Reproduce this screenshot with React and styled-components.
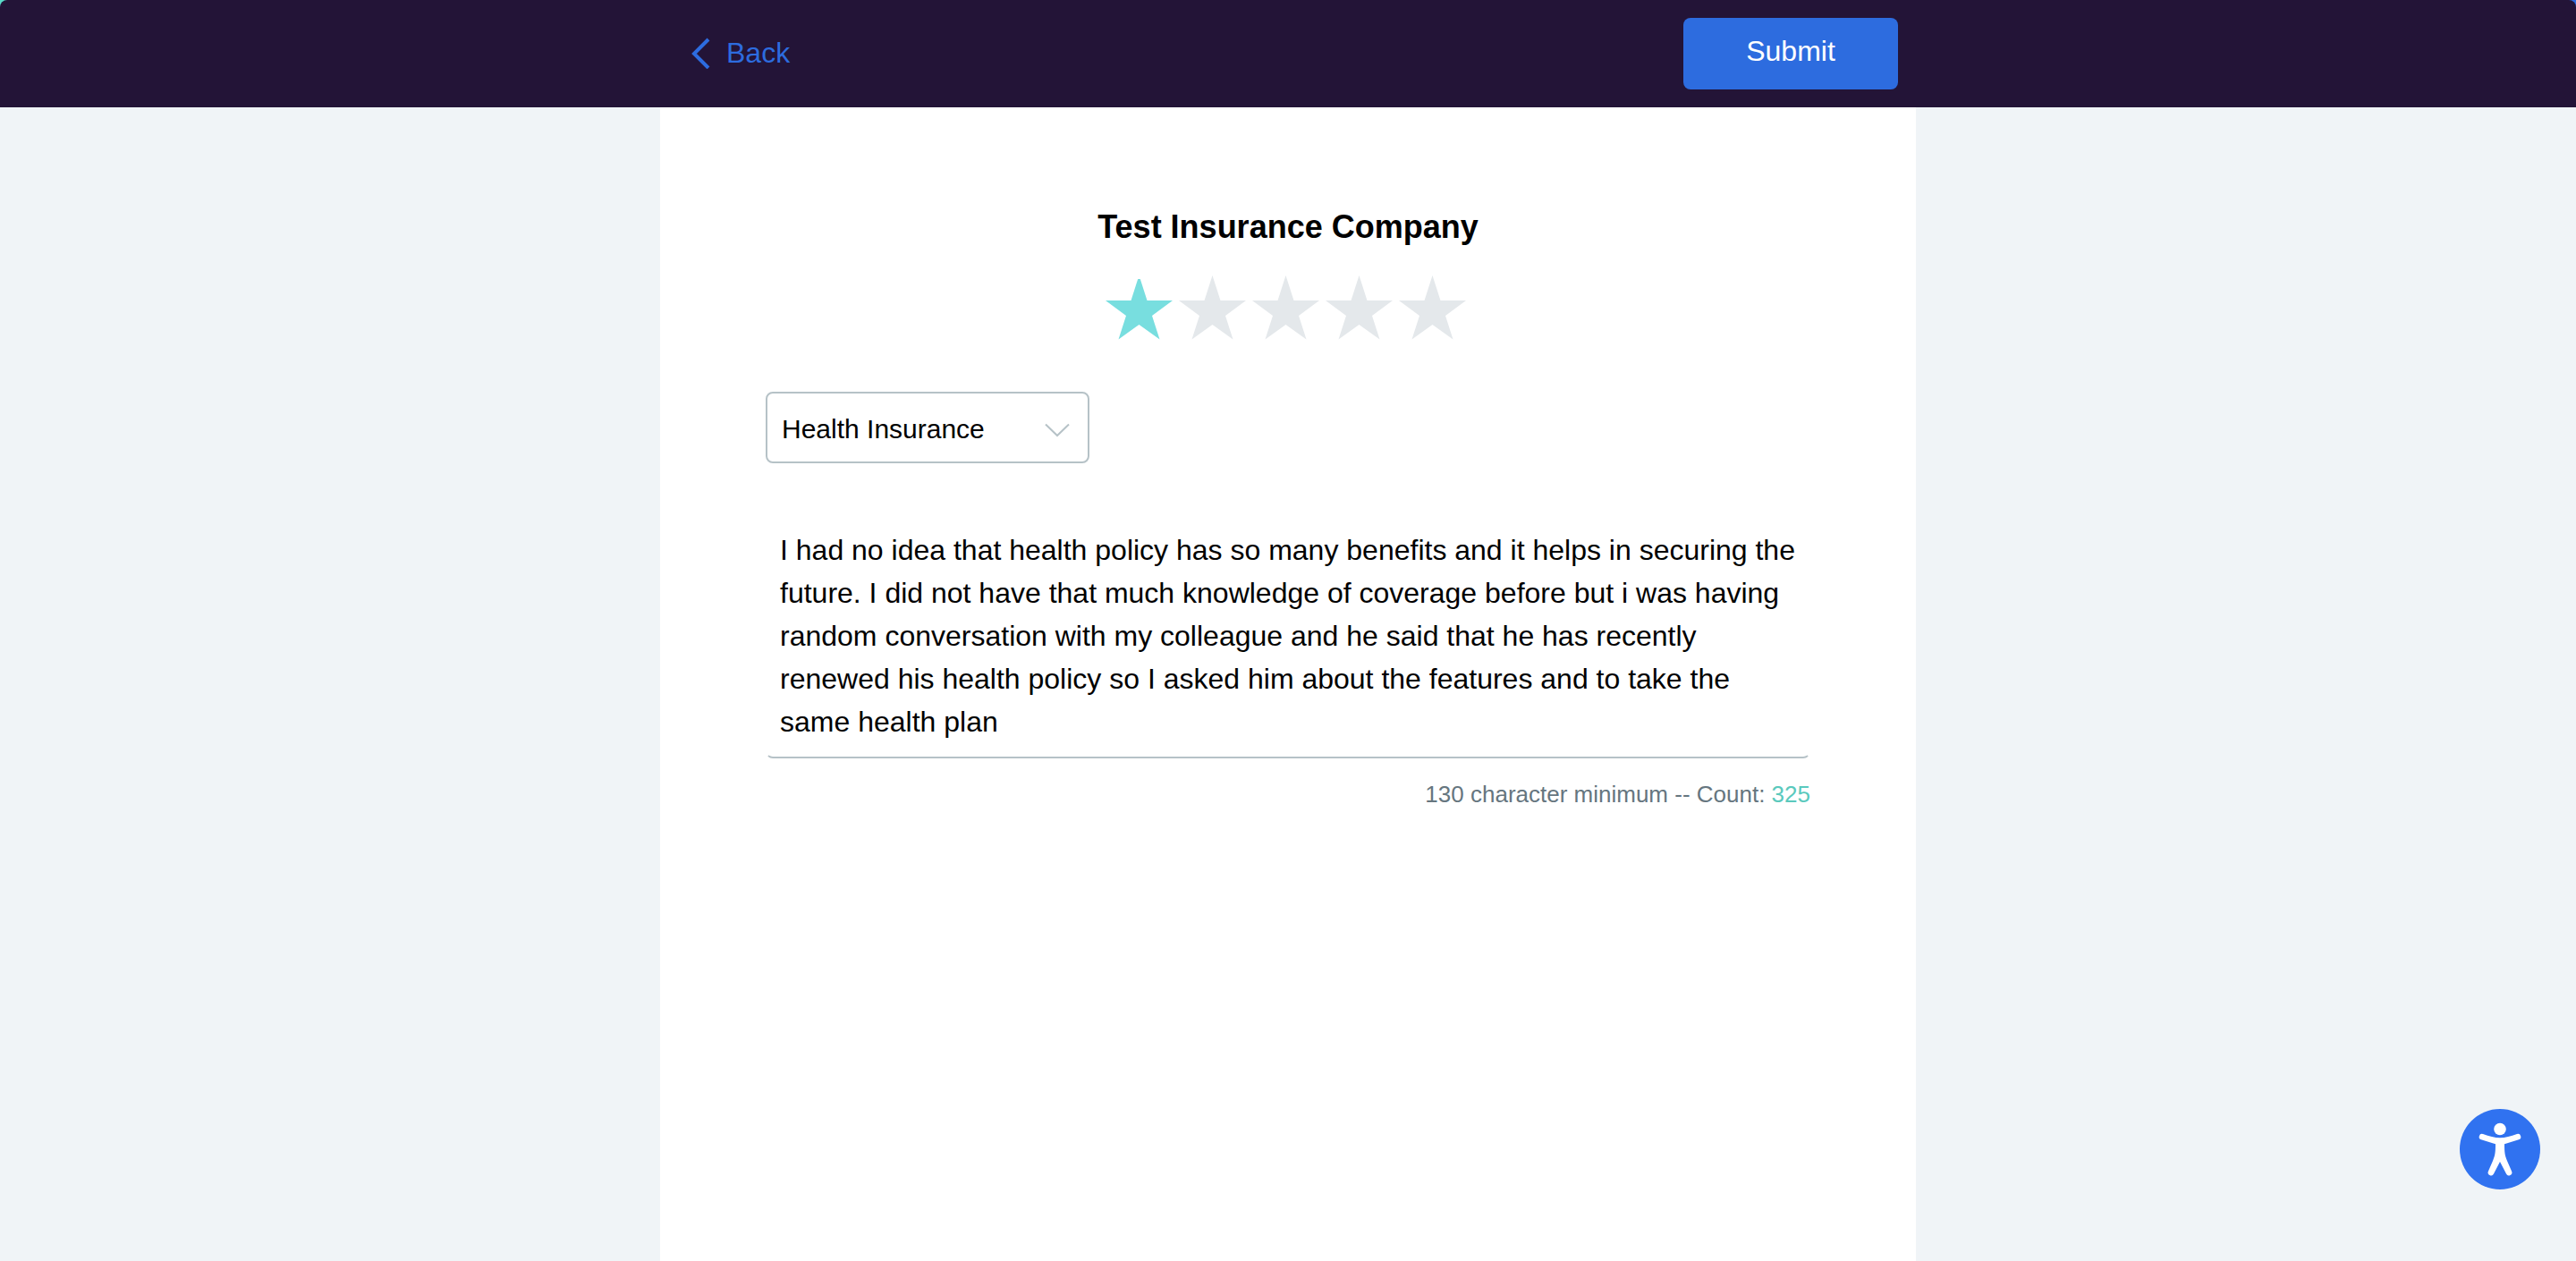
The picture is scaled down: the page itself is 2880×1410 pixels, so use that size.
import React, { useState } from "react";
import styled, { createGlobalStyle } from "styled-components";

const GlobalStyle = createGlobalStyle`
  *, *::before, *::after { box-sizing: border-box; }
  body {
    margin: 0;
    background: #f0f4f7;
    color: #000;
    font-family: "Liberation Sans", Arial, Helvetica, sans-serif;
  }
  button, select, textarea { font-family: inherit; }
`;

const Page = styled.div`
  min-height: 100vh;
  display: flex;
  flex-direction: column;
`;

const HeaderBackdrop = styled.div`
  background: linear-gradient(90deg, #5adbc9 50%, #2d6cdf 50%);
`;

const Header = styled.header`
  background: #231437;
  border-radius: 8px 8px 0 0;
`;

const HeaderInner = styled.div`
  max-width: 1404px;
  margin: 0 auto;
  padding: 20px 20px 20px 34px;
  display: flex;
  align-items: center;
  justify-content: space-between;
`;

const BackLink = styled.a`
  display: inline-flex;
  align-items: center;
  gap: 18px;
  padding-bottom: 2px;
  color: #2d6cdf;
  font-size: 32px;
  line-height: 40px;
  text-decoration: none;
`;

const SubmitButton = styled.button`
  width: 240px;
  height: 80px;
  padding: 0 0 6px;
  border: 0;
  border-radius: 8px;
  background: #2d6cdf;
  color: #fff;
  font-size: 32px;
  line-height: 40px;
  cursor: pointer;
`;

const Sheet = styled.main`
  flex: 1;
  width: 100%;
  max-width: 1404px;
  margin: 0 auto;
  padding: 112px 118px 48px;
  background: #fff;
`;

const Title = styled.h1`
  margin: 0;
  font-size: 36px;
  line-height: 44px;
  text-align: center;
`;

const Rating = styled.fieldset`
  display: flex;
  justify-content: center;
  margin: 32px 0 0;
  padding: 0;
  border: 0;
`;

const StarLabel = styled.label`
  display: flex;
  width: 82px;
  padding-left: 1px;
  color: ${(p) => (p.$on ? "#78dedf" : "#e4e8eb")};
  cursor: pointer;
`;

const HiddenInput = styled.input`
  appearance: none;
  width: 0;
  height: 0;
  margin: 0;
`;

const SelectBox = styled.div`
  display: grid;
  width: 362px;
  margin-top: 58px;
  align-items: center;

  > * { grid-area: 1 / 1; }
  > svg {
    justify-self: end;
    margin: 6px 22px 0 0;
    pointer-events: none;
  }
`;

const Select = styled.select`
  appearance: none;
  width: 100%;
  height: 80px;
  padding: 2px 64px 0 16px;
  border: 2px solid #b6c2c7;
  border-radius: 8px;
  background: #fff;
  color: #000;
  font-size: 30px;
`;

const Review = styled.textarea`
  display: block;
  width: 100%;
  height: 274px;
  margin-top: 56px;
  padding: 15px 14px 0;
  border: 2px solid transparent;
  border-bottom-color: #b6c2c7;
  border-radius: 8px;
  background: transparent;
  color: #000;
  font-size: 32px;
  line-height: 48px;
  resize: none;
  overflow: hidden;
  outline: none;
`;

const Hint = styled.p`
  margin: 22px 0 0;
  color: #66767f;
  font-size: 26px;
  line-height: 36px;
  text-align: right;
`;

const Count = styled.span`
  color: #5ac9bd;
`;

const AccessButton = styled.button`
  position: fixed;
  right: 40px;
  bottom: 80px;
  display: flex;
  width: 90px;
  height: 90px;
  padding: 0;
  border: 0;
  border-radius: 50%;
  background: #3072f0;
  cursor: pointer;
`;

const STAR = "M37.5 0 46.5 28H75L52 45l8.5 26.5L37.5 55l-23 16.5L23 45 0 28h28.5z";
const STAR_CHOSEN =
  "M36.2 4h2.6l7.7 24H75L52 45l8.5 26.5L37.5 55l-23 16.5L23 45 0 28h28.5z";

const TEXT =
  "I had no idea that health policy has so many benefits and it helps in securing the future. I did not have that much knowledge of coverage before but i was having random conversation with my colleague and he said that he has recently renewed his health policy so I asked him about the features and to take the same health plan";

function Star({ value, rating, onPick }) {
  const on = value <= rating;
  return (
    <StarLabel $on={on}>
      <HiddenInput
        type="radio"
        name="rating"
        aria-label={String(value)}
        checked={value === rating}
        onChange={() => onPick(value)}
      />
      <svg width="75" height="72" viewBox="0 0 75 72" aria-hidden="true">
        <path d={on ? STAR_CHOSEN : STAR} fill="currentColor" />
      </svg>
    </StarLabel>
  );
}

export default function App() {
  const [rating, setRating] = useState(1);
  const [text, setText] = useState(TEXT);

  return (
    <Page>
      <GlobalStyle />
      <HeaderBackdrop>
        <Header>
          <HeaderInner>
            <BackLink href="#back">
              <svg width="22" height="36" viewBox="0 0 22 36" aria-hidden="true">
                <path d="M20 3 4 19l16 16" fill="none" stroke="currentColor" strokeWidth="4" />
              </svg>
              Back
            </BackLink>
            <SubmitButton type="submit" form="review">Submit</SubmitButton>
          </HeaderInner>
        </Header>
      </HeaderBackdrop>
      <Sheet>
        <form id="review" onSubmit={(e) => e.preventDefault()}>
          <Title>Test Insurance Company</Title>
          <Rating aria-label="Rating">
            {[1, 2, 3, 4, 5].map((v) => (
              <Star key={v} value={v} rating={rating} onPick={setRating} />
            ))}
          </Rating>
          <SelectBox>
            <Select aria-label="Insurance type" defaultValue="health">
              <option value="health">Health Insurance</option>
            </Select>
            <svg width="28" height="16" viewBox="0 0 28 16" aria-hidden="true">
              <path d="M1 1.5 14 14 27 1.5" fill="none" stroke="#b6c2c7" strokeWidth="2" />
            </svg>
          </SelectBox>
          <Review
            aria-label="Review"
            spellCheck={false}
            value={text}
            onChange={(e) => setText(e.target.value)}
          />
          <Hint>
            130 character minimum -- Count: <Count>{text.length}</Count>
          </Hint>
        </form>
      </Sheet>
      <AccessButton type="button" aria-label="Accessibility">
        <svg width="90" height="90" viewBox="0 0 90 90" fill="#fff" aria-hidden="true">
          <circle cx="45" cy="22.5" r="6.8" />
          <path d="M26 28C33 30.5 39 32.3 45 32.3S57 30.5 64 28A3.3 3.3 0 0 1 66 34.3L50 39.3C50 49 50.5 52 53 58L58 69.5A3.3 3.3 0 0 1 52 72.5L45 59 38 72.5A3.3 3.3 0 0 1 32 69.5L37 58C39.5 52 40 49 40 39.3L24 34.3A3.3 3.3 0 0 1 26 28Z" />
        </svg>
      </AccessButton>
    </Page>
  );
}
